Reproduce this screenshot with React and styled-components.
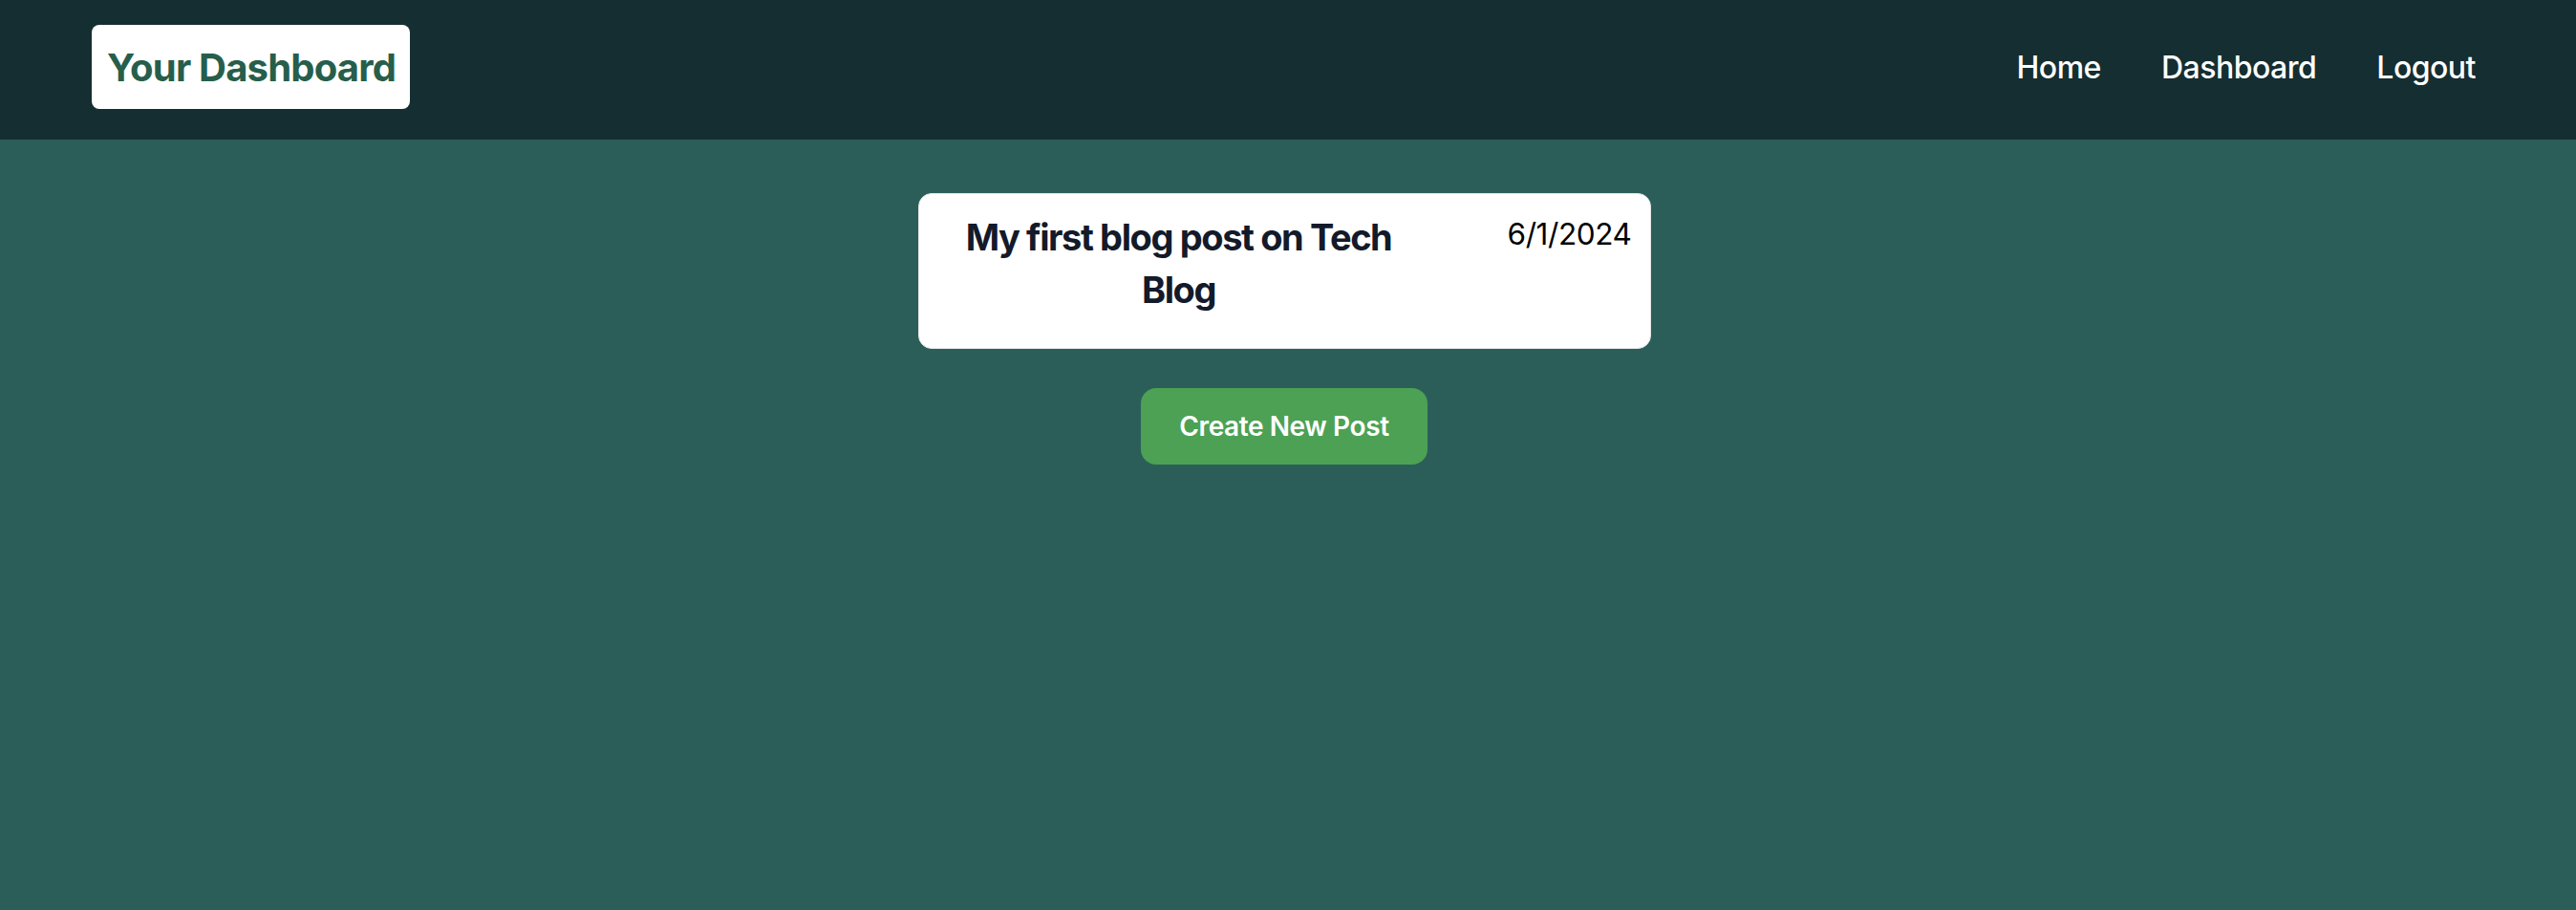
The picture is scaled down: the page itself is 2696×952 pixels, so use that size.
import React from "react";
import styled, { createGlobalStyle } from "styled-components";

const GlobalStyle = createGlobalStyle`
  html, body {
    margin: 0;
    padding: 0;
    background-color: #2c5e59;
    font-family: Inter, "Noto Sans", sans-serif;
  }
`;

const posts = [{ id: 1, title: "My first blog post on Tech Blog", date: "6/1/2024" }];

const App = () => {
  return (
    <Page>
      <GlobalStyle />
      <Header>
        <Logo>Your Dashboard</Logo>
        <Nav>
          <NavLink href="#">Home</NavLink>
          <NavLink href="#">Dashboard</NavLink>
          <NavLink href="#">Logout</NavLink>
        </Nav>
      </Header>
      <Main>
        {posts.map((post) => (
          <PostCard key={post.id}>
            <PostTitle>{post.title}</PostTitle>
            <PostDate>{post.date}</PostDate>
          </PostCard>
        ))}
        <CreateButton>Create New Post</CreateButton>
      </Main>
    </Page>
  );
};

export default App;

const Page = styled.div`
  min-height: 952px;
  background-color: #2c5e59;
`;

const Header = styled.header`
  height: 146px;
  box-sizing: border-box;
  display: flex;
  align-items: center;
  justify-content: space-between;
  padding: 0px 105px 6px 96px;
  background-color: #152e31;
`;

const Logo = styled.h1`
  margin: 0px;
  height: 88px;
  box-sizing: border-box;
  display: flex;
  align-items: center;
  padding: 0px 15px 0px 16px;
  background-color: #ffffff;
  border-radius: 8px;
  color: #275e4b;
  font-size: 40px;
  font-weight: 700;
  letter-spacing: -0.8px;
`;

const Nav = styled.nav`
  display: flex;
  align-items: center;
  gap: 63px;
`;

const NavLink = styled.a`
  color: #ffffff;
  text-decoration: none;
  font-size: 32px;
  font-weight: 500;
  letter-spacing: -0.5px;
`;

const Main = styled.main`
  display: flex;
  flex-direction: column;
  align-items: center;
  padding: 56px 8px 0px 0px;
  gap: 41px;
`;

const PostCard = styled.div`
  width: 767px;
  height: 163px;
  box-sizing: border-box;
  display: flex;
  justify-content: space-between;
  align-items: flex-start;
  padding: 18px 19px 0px 20px;
  background-color: #ffffff;
  border: 1px solid #e3e6e6;
  border-radius: 14px;
`;

const PostTitle = styled.h2`
  width: 504px;
  margin: 0px;
  text-align: center;
  color: #131a2a;
  font-size: 38px;
  line-height: 55px;
  font-weight: 700;
  letter-spacing: -1.4px;
`;

const PostDate = styled.span`
  margin-top: 4px;
  color: #000000;
  font-size: 31.5px;
  line-height: 40px;
  font-weight: 400;
  letter-spacing: -0.4px;
`;

const CreateButton = styled.button`
  width: 300px;
  height: 80px;
  border: none;
  border-radius: 16px;
  background-color: #4ca155;
  color: #ffffff;
  font-family: Inter, "Noto Sans", sans-serif;
  font-size: 28px;
  font-weight: 600;
  letter-spacing: -0.4px;
  cursor: pointer;
`;
